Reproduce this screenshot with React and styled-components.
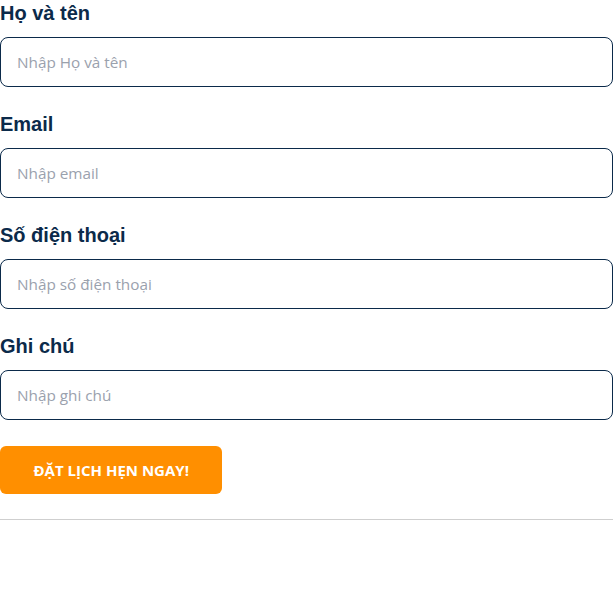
import React from 'react'
import styled, {createGlobalStyle} from 'styled-components'

const NAVY = '#0b2a4a'
const ORANGE = '#ff8f00'

const Global = createGlobalStyle`
  body {
    margin: 0;
    background: #fff;
    font-family: "Open Sans", "Liberation Sans", sans-serif;
  }
`

const Form = styled.form`
  display: flex;
  flex-direction: column;
`

const Field = styled.div`
  display: flex;
  flex-direction: column;
  margin-bottom: 24px;
`

const Label = styled.label`
  font-family: "Liberation Sans", Arial, sans-serif;
  font-size: 20px;
  line-height: 26px;
  font-weight: 700;
  color: ${NAVY};
  margin-bottom: 11px;
`

const Input = styled.input`
  box-sizing: border-box;
  width: 100%;
  height: 50px;
  padding: 0 16px;
  border: 1px solid ${NAVY};
  border-radius: 8px;
  font-family: "Open Sans", sans-serif;
  font-size: 15.3px;
  color: #333;
  outline: none;

  &::placeholder {
    color: #9aa1ad;
  }
`

const Button = styled.button`
  align-self: flex-start;
  margin-top: 2px;
  height: 48px;
  padding: 0 33.5px;
  border: none;
  border-radius: 6px;
  background: ${ORANGE};
  color: #fff;
  font-family: "Open Sans", sans-serif;
  font-size: 15px;
  font-weight: 700;
  text-transform: uppercase;
  cursor: pointer;
`

const Rule = styled.hr`
  margin: 25px 0 0;
  border: none;
  border-top: 1px solid #cfcfcf;
`

const fields = [
  {label: 'Họ và tên', placeholder: 'Nhập Họ và tên'},
  {label: 'Email', placeholder: 'Nhập email'},
  {label: 'Số điện thoại', placeholder: 'Nhập số điện thoại'},
  {label: 'Ghi chú', placeholder: 'Nhập ghi chú'},
]

export default function App() {
  return (
    <>
      <Global />
      <Form onSubmit={e => e.preventDefault()}>
        {fields.map(f => (
          <Field key={f.label}>
            <Label>{f.label}</Label>
            <Input placeholder={f.placeholder} />
          </Field>
        ))}
        <Button type="submit">Đặt lịch hẹn ngay!</Button>
      </Form>
      <Rule />
    </>
  )
}
